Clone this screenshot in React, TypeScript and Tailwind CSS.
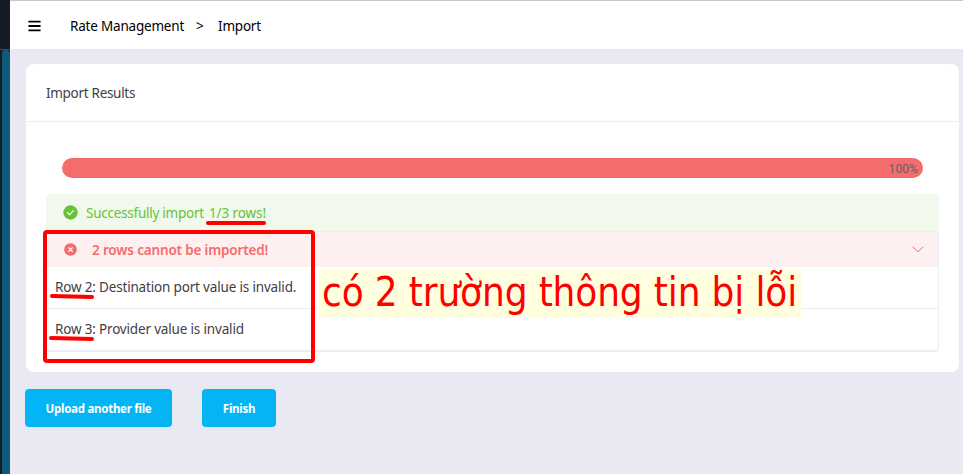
import { FaBars } from "react-icons/fa";

const errors = [
  { row: "Row 2", message: "Destination port value is invalid." },
  { row: "Row 3", message: "Provider value is invalid" },
];

function Sidebar() {
  return (
    <aside className="flex w-[10px] shrink-0 flex-col bg-[#161b25]">
      <div className="h-[50px] border-b border-[#454a54]" />
      <div className="ml-[2px] flex-1 rounded-t-[4px] bg-[#0e5a7b]" />
    </aside>
  );
}

function Header() {
  return (
    <header className="flex h-[49px] items-center border-t border-[#c8c8c8] bg-white pl-[18px] text-[13.5px] text-black">
      <FaBars className="mt-px h-[14px] w-[13px]" />
      <nav className="ml-[29px] flex items-center pt-[2px] leading-[20px] tracking-[-0.2px] whitespace-nowrap">
        <span className="w-[126px]">Rate Management</span>
        <span className="w-[22px]">&gt;</span>
        <span>Import</span>
      </nav>
    </header>
  );
}

function CheckIcon() {
  return (
    <svg viewBox="0 0 16 16" className="h-[15px] w-[15px]" fill="none">
      <circle cx="8" cy="8" r="7.7" fill="#67c23a" />
      <path d="m4.7 8.2 2.2 2.2 4.3-4.4" stroke="#fff" strokeWidth="1.2" strokeLinecap="round" />
    </svg>
  );
}

function CrossIcon() {
  return (
    <svg viewBox="0 0 14 14" className="h-[13px] w-[13px]" fill="none">
      <circle cx="7" cy="7" r="6.8" fill="#f56c6c" />
      <path d="m5.1 5.1 3.8 3.8m0-3.8L5.1 8.9" stroke="#fff" strokeWidth="1.3" strokeLinecap="round" />
    </svg>
  );
}

function Results() {
  return (
    <section className="ml-[16px] h-[308px] w-[933px] rounded-[8px] bg-white text-[13.5px] text-[#3f4044]">
      <h1 className="h-[58px] border-b border-[#ebeef5] pt-[19px] pl-[20px] leading-[20px] tracking-[-0.3px]">
        Import Results
      </h1>
      <div className="px-[20px] pt-[36px]">
        <div className="mx-[16px] flex h-[20px] items-center justify-end rounded-full bg-[#f56c6c] pr-[5px] pt-[2px] font-[Roboto,sans-serif] text-[12px] tracking-[0.1px] text-[#606266]">
          100%
        </div>
        <div className="mt-[16px] flex h-[37px] items-center rounded-[4px] bg-[#f0f9eb] pl-[17px] text-[#67c23a]">
          <CheckIcon />
          <p className="ml-[8px] flex pt-px leading-[20px] whitespace-nowrap">
            <span className="w-[123px] tracking-[-0.25px]">Successfully import</span>
            <span className="tracking-[-0.1px]">1/3 rows!</span>
          </p>
        </div>
        <div className="rounded-[4px] border border-b-2 border-[#ebeef5]">
          <div className="flex h-[35px] items-center rounded-t-[3px] bg-[#fef0f0] pr-[14px] pl-[17px] text-[#f56c6c]">
            <CrossIcon />
            <p className="ml-[15px] flex-1 pt-[2px] font-semibold tracking-[-0.16px]">
              2 rows cannot be imported!
            </p>
            <svg viewBox="0 0 12 7" className="h-[7px] w-[12px]" fill="none" stroke="currentColor">
              <path d="m.8.8 5.2 5 5.2-5" />
            </svg>
          </div>
          <ul>
            {errors.map(({ row, message }) => (
              <li
                key={row}
                className="flex h-[42px] items-center border-b border-[#ebeef5] pl-[8px] tracking-[-0.17px] whitespace-nowrap last:h-[41px] last:border-b-0"
              >
                <span className="w-[44px]">{row}:</span>
                <span>{message}</span>
              </li>
            ))}
          </ul>
        </div>
      </div>
    </section>
  );
}

function Annotations() {
  return (
    <div className="pointer-events-none absolute inset-0">
      <div className="absolute top-[230px] left-[43px] h-[133px] w-[272px] rounded-[4px] border-4 border-[#fe0000]" />
      <svg
        className="absolute inset-0"
        width="963"
        height="474"
        fill="none"
        stroke="#fe0000"
        strokeWidth="4"
        strokeLinecap="round"
      >
        <path d="M208 223H264" />
        <path d="M52 296L92 297" />
        <path d="M51 338L92 339" />
      </svg>
      <div className="absolute top-[270px] left-[319px] h-[48px] w-[482px] bg-[#ffffdd]/95 pl-[3px] font-['DejaVu_Sans_Condensed','DejaVu_Sans',sans-serif] text-[40px] leading-[45px] font-normal tracking-[-0.14px] whitespace-nowrap text-[#fe0000]">
        có 2 trường thông tin bị lỗi
      </div>
    </div>
  );
}

export default function App() {
  return (
    <div className="relative flex h-[474px] w-[963px] overflow-hidden bg-[#e9e9f3] font-['Noto_Sans','Open_Sans',sans-serif]">
      <Sidebar />
      <div className="min-w-0 flex-1">
        <Header />
        <main className="pt-[15px]">
          <Results />
          <div className="mt-[17px] ml-[15px] flex gap-[30px] text-[11.5px] font-bold tracking-[-0.27px] text-white">
            <button className="h-[38px] w-[147px] rounded-[4px] bg-[#03b5f5] pt-[2px]">Upload another file</button>
            <button className="h-[38px] w-[74px] rounded-[4px] bg-[#03b5f5] pt-[2px]">Finish</button>
          </div>
        </main>
      </div>
      <Annotations />
    </div>
  );
}
